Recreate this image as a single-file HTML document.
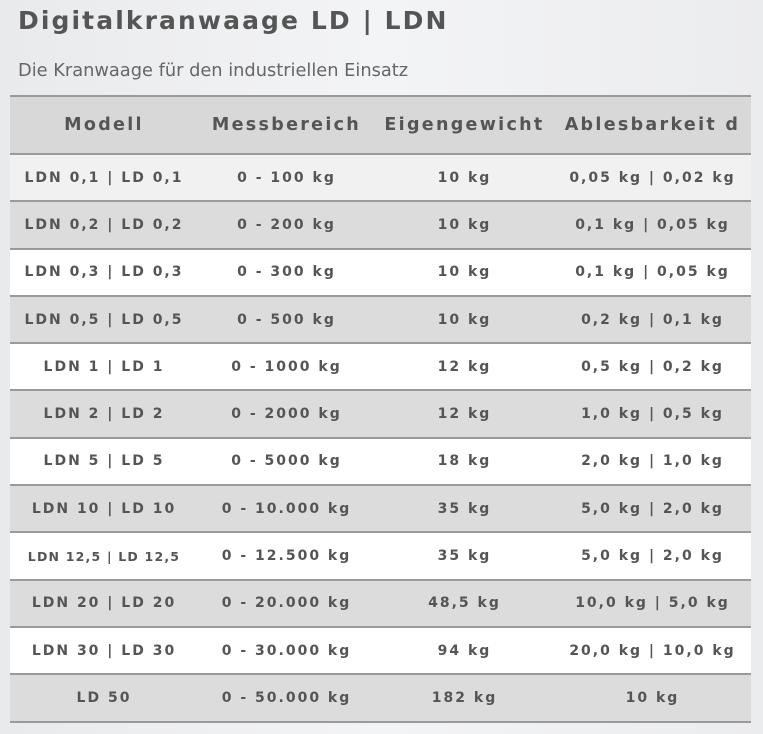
<!DOCTYPE html>
<html><head><meta charset="utf-8"><style>
html,body{margin:0;padding:0;}
body{width:763px;height:734px;background:linear-gradient(90deg,#e9eaec,#f3f4f6 50%,#ebecee);font-family:"DejaVu Sans","Liberation Sans",sans-serif;position:relative;overflow:hidden;}
h1{position:absolute;left:18px;top:6px;margin:0;font-size:25px;font-weight:bold;color:#555;letter-spacing:2.1px;white-space:nowrap;}
.sub{position:absolute;left:18px;top:60px;font-size:17.8px;color:#666;white-space:nowrap;}
table{position:absolute;left:10px;top:95px;width:741px;border-collapse:collapse;table-layout:fixed;}
td,th{text-align:center;color:#555;font-weight:bold;padding:0;border-bottom:2px solid #9a9a9a;white-space:nowrap;}
th{height:56px;font-size:17.5px;letter-spacing:2.3px;background:#d8d8d8;border-top:2px solid #9a9a9a;}
td{height:45.3px;font-size:14px;letter-spacing:2px;}
tr.a td{background:#f1f1f1}
tr.g td{background:#dcdcdc}
tr.w td{background:#fff}
.s{font-size:12.5px;letter-spacing:1.2px}
</style></head><body>
<h1>Digitalkranwaage LD | LDN</h1>
<div class="sub">Die Kranwaage für den industriellen Einsatz</div>
<table>
<colgroup><col style="width:188px"><col style="width:177px"><col style="width:179px"><col style="width:197px"></colgroup>
<tr><th>Modell</th><th>Messbereich</th><th>Eigengewicht</th><th>Ablesbarkeit d</th></tr>
<tr class="a"><td>LDN 0,1 | LD 0,1</td><td>0 - 100 kg</td><td>10 kg</td><td>0,05 kg | 0,02 kg</td></tr>
<tr class="g"><td>LDN 0,2 | LD 0,2</td><td>0 - 200 kg</td><td>10 kg</td><td>0,1 kg | 0,05 kg</td></tr>
<tr class="w"><td>LDN 0,3 | LD 0,3</td><td>0 - 300 kg</td><td>10 kg</td><td>0,1 kg | 0,05 kg</td></tr>
<tr class="g"><td>LDN 0,5 | LD 0,5</td><td>0 - 500 kg</td><td>10 kg</td><td>0,2 kg | 0,1 kg</td></tr>
<tr class="w"><td>LDN 1 | LD 1</td><td>0 - 1000 kg</td><td>12 kg</td><td>0,5 kg | 0,2 kg</td></tr>
<tr class="g"><td>LDN 2 | LD 2</td><td>0 - 2000 kg</td><td>12 kg</td><td>1,0 kg | 0,5 kg</td></tr>
<tr class="w"><td>LDN 5 | LD 5</td><td>0 - 5000 kg</td><td>18 kg</td><td>2,0 kg | 1,0 kg</td></tr>
<tr class="g"><td>LDN 10 | LD 10</td><td>0 - 10.000 kg</td><td>35 kg</td><td>5,0 kg | 2,0 kg</td></tr>
<tr class="w"><td class="s">LDN 12,5 | LD 12,5</td><td>0 - 12.500 kg</td><td>35 kg</td><td>5,0 kg | 2,0 kg</td></tr>
<tr class="g"><td>LDN 20 | LD 20</td><td>0 - 20.000 kg</td><td>48,5 kg</td><td>10,0 kg | 5,0 kg</td></tr>
<tr class="w"><td>LDN 30 | LD 30</td><td>0 - 30.000 kg</td><td>94 kg</td><td>20,0 kg | 10,0 kg</td></tr>
<tr class="g"><td>LD 50</td><td>0 - 50.000 kg</td><td>182 kg</td><td>10 kg</td></tr>
</table>
</body></html>
